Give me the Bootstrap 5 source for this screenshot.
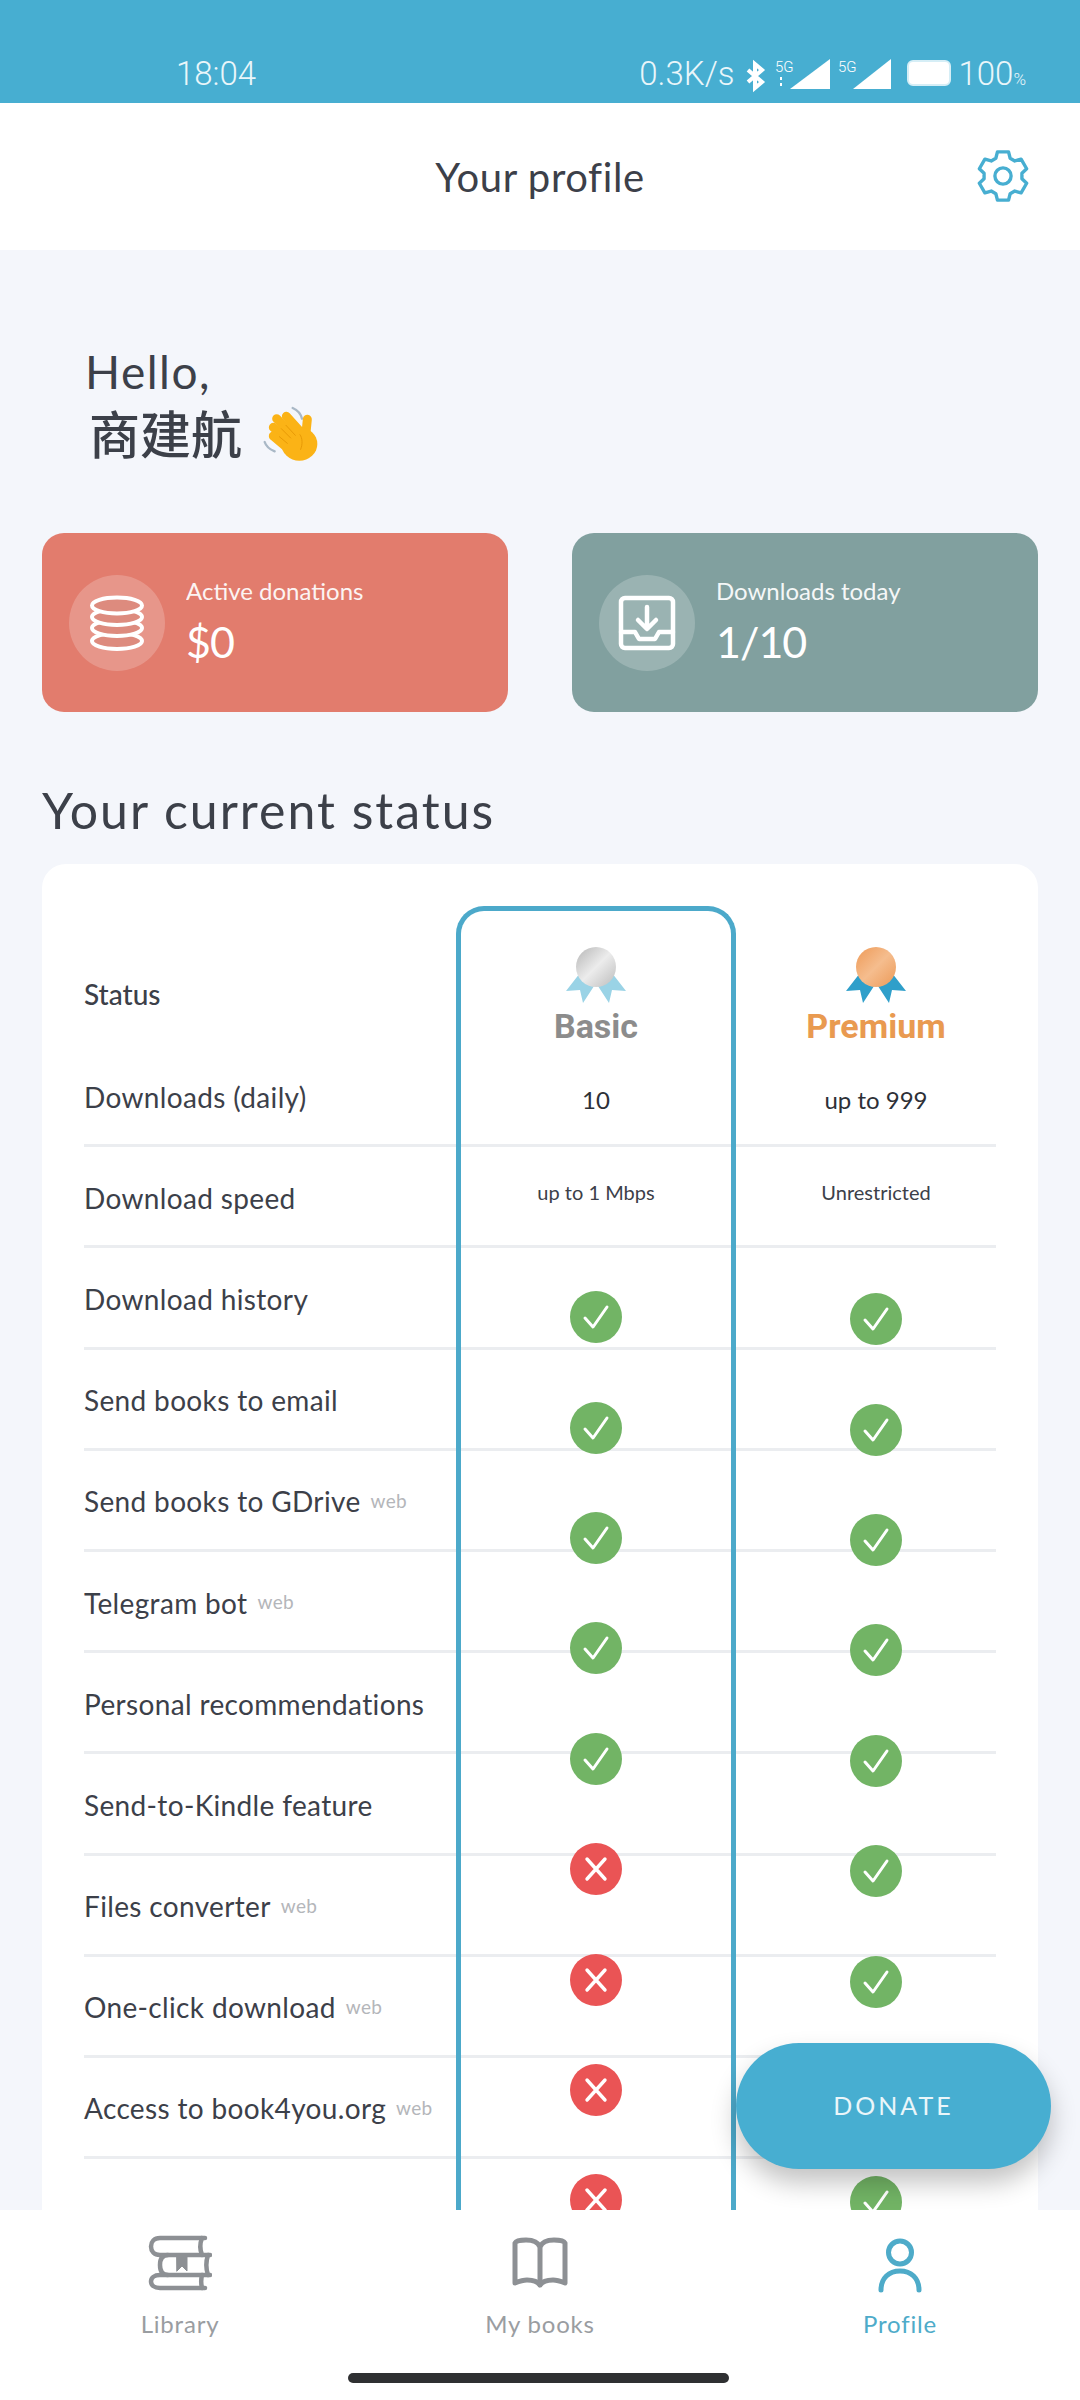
<!DOCTYPE html>
<html lang="en">
<head>
    <meta charset="UTF-8">
    <meta name="viewport" content="width=device-width, initial-scale=1.0">
    <title>Your profile</title>
    <link href="https://cdn.jsdelivr.net/npm/bootstrap@5.3.0/dist/css/bootstrap.min.css" rel="stylesheet">
    <style>
        body { height: 2400px; background: #f4f6fb; color: #3c4049; font-family: "Lato", "Noto Sans CJK SC", sans-serif; font-size: 28px; }
        .status-strip { height: 103px; background: #47aed1; color: #eaf6fa; font-family: "Roboto", sans-serif; font-weight: 300; font-size: 33px; padding: 0 54px 12px 176px; line-height: 34px; }
        .status-strip small { font-size: 17px; line-height: 1; }
        .sig-svg { margin-left: 8px; overflow: visible; }
        .batt-svg { margin: 0 0 5px 16px; }
        .title-strip { height: 147px; }
        .title-strip h1 { font-size: 40px; font-weight: 400; margin: 0; letter-spacing: .6px; }
        .gear-btn { right: 50px; top: 46px; }
        .greeting { padding: 91px 0 0 85px; height: 283px; }
        .hello-line { font-size: 46px; line-height: 62px; letter-spacing: 1.5px; }
        .name-line { font-size: 51px; line-height: 64px; font-weight: 500; padding-left: 4px; }
        .hand-svg { margin: -5px 0 -11px 20px; }
        .stat-row { padding: 0 42px; gap: 64px; }
        .stat-box { height: 179px; border-radius: 22px; padding-left: 27px; gap: 21px; color: #fff; }
        .stat-red { background: #e27c6d; }
        .stat-teal { background: #81a09f; }
        .stat-circle { width: 96px; height: 96px; background: rgba(255,255,255,.2); }
        .stat-label { font-size: 24px; line-height: 28px; margin: -3px 0 13px; opacity: .92; }
        .stat-value { font-size: 43px; line-height: 48px; letter-spacing: -1px; }
        .section-title { font-size: 50px; font-weight: 400; margin: 68px 0 0 42px; line-height: 60px; letter-spacing: 2px; }
        .table-box { margin: 24px 42px 0; background: #fff; border-radius: 24px; padding: 0 42px; height: 1400px; }
        .head-row { height: 182px; padding-top: 77px; font-weight: 500; }
        .feature-row { height: 101.2px; border-bottom: 3px solid #ebedf0; letter-spacing: .35px; padding-top: 3px; }
        .head-row, .feature-row { display: flex; align-items: center; }
        .web-tag { font-size: 19px; color: #b4b6ba; margin-left: 10px; }
        .plan-col { position: absolute; top: 42px; width: 280px; text-align: center; }
        .plan-basic { left: 414px; padding-top: 36px; border: 5px solid #4ca9ca; border-bottom: 0; border-radius: 28px 28px 0 0; height: 1400px; }
        .plan-premium { left: 694px; padding-top: 41px; }
        .medal-svg { display: block; margin: 0 auto; }
        .plan-name { font-family: "Roboto", sans-serif; font-weight: 700; font-size: 34px; height: 45px; line-height: 46px; }
        .name-basic { color: #8c8c8c; }
        .name-premium { color: #e99a50; }
        .plan-count { height: 103px; line-height: 104px; font-size: 24px; color: #2d3037; }
        .plan-speed { height: 82px; line-height: 82px; font-size: 20px; margin-bottom: 29px; color: #3c4049; }
        .plan-premium .plan-speed { margin-bottom: 31px; }
        .mark-slot { height: 110.4px; display: flex; align-items: center; justify-content: center; }
        .donate-btn { position: absolute; left: 736px; top: 2043px; width: 315px; height: 126px; border-radius: 63px; background: #47aed1; color: #eaf6fa; font-size: 25px; letter-spacing: 3px; box-shadow: 0 14px 26px rgba(0,0,0,.24); border: 0; z-index: 5; }
        .tab-strip { height: 190px; background: #fff; position: relative; z-index: 3; }
        .tab-item { height: 130px; padding-top: 25px; font-size: 24px; color: #9a9da1; letter-spacing: .8px; }
        .tab-icon { height: 60px; margin-bottom: 11px; }
        .tab-on { color: #4eabc9; }
        .home-bar { position: absolute; left: 348px; top: 163px; width: 381px; height: 10px; border-radius: 5px; background: #2f3032; }
    </style>
</head>
<body class="d-flex flex-column overflow-hidden position-relative m-0">
    <svg width="0" height="0" class="position-absolute">
        <symbol id="ok" viewBox="0 0 52 52"><circle cx="26" cy="26" r="26" fill="#72b465"/><path d="M15 27l8 9 14-20" fill="none" stroke="#fff" stroke-width="3" stroke-linecap="round" stroke-linejoin="round"/></symbol>
        <symbol id="no" viewBox="0 0 52 52"><circle cx="26" cy="26" r="26" fill="#ea5455"/><path d="M17 16l18 20M35 16L17 36" fill="none" stroke="#fff" stroke-width="3.4" stroke-linecap="round"/></symbol>
    </svg>

    <!-- Status bar -->
    <div class="status-strip d-flex align-items-end justify-content-between flex-shrink-0">
        <span>18:04</span>
        <div class="d-flex align-items-end">
            <span>0.3K/s</span>
            <svg class="sig-svg" width="24" height="30" viewBox="0 0 24 30"><path d="M5 9l14 12-7 6V3l7 6L5 21" fill="none" stroke="#fff" stroke-width="4"/></svg>
            <svg class="sig-svg" width="55" height="32" viewBox="0 0 55 32"><polygon points="55,0 55,30 15,30" fill="#fff"/><text x="0" y="13" font-size="15" fill="#fff">5G</text><path d="M6 18v3M6 24v3" stroke="#fff" stroke-width="2"/></svg>
            <svg class="sig-svg" width="53" height="32" viewBox="0 0 53 32"><polygon points="53,0 53,30 15,30" fill="#fff"/><text x="0" y="13" font-size="15" fill="#fff">5G</text></svg>
            <svg class="batt-svg" width="44" height="26" viewBox="0 0 44 26"><rect x="1" y="1" width="42" height="24" rx="5" fill="#fff" stroke="#d6eef6" stroke-width="2"/></svg>
            <span class="ms-2">100<small>%</small></span>
        </div>
    </div>

    <!-- Top bar -->
    <header class="title-strip bg-white d-flex align-items-center justify-content-center position-relative flex-shrink-0">
        <h1>Your profile</h1>
        <svg class="gear-btn position-absolute" width="54" height="54" viewBox="0 0 24 24" fill="none" stroke="#47aed1" stroke-width="1.5" stroke-linejoin="round">
            <path d="M8.82 4.12L9.53 1.28H14.47L15.18 4.12L17.23 5.31L20.05 4.5L22.52 8.78L20.41 10.81V13.19L22.52 15.22L20.05 19.5L17.23 18.69L15.18 19.88L14.47 22.72H9.53L8.82 19.88L6.77 18.69L3.95 19.5L1.48 15.22L3.59 13.19V10.81L1.48 8.78L3.95 4.5L6.77 5.31Z"/>
            <circle cx="12" cy="12" r="3.6"/>
        </svg>
    </header>

    <main class="flex-grow-1 overflow-hidden">
        <div class="greeting">
            <div class="hello-line">Hello,</div>
            <div class="name-line d-flex align-items-center">商建航
                <svg class="hand-svg" width="80" height="80" viewBox="0 0 240 240">
                    <path d="M92 30c14 6 24 16 28 32M8 132c4 12 14 22 30 28" stroke="#a9b8c6" stroke-width="7" fill="none" stroke-linecap="round"/>
                    <g stroke="#fbb316" stroke-width="27" stroke-linecap="round" fill="none">
                        <path d="M73 55l50 55"/>
                        <path d="M44 62l60 60"/>
                        <path d="M34 88l56 48"/>
                        <path d="M34 114l50 42"/>
                        <path d="M136 64l-6 60"/>
                    </g>
                    <ellipse cx="112" cy="138" rx="54" ry="50" fill="#fbb316"/>
                    <path d="M72 82l28 30M58 92l28 28M52 116l24 20M114 110c8 10 8 30 2 44" stroke="#e89a06" stroke-width="3" fill="none" stroke-linecap="round"/>
                </svg>
            </div>
        </div>

        <div class="stat-row d-flex">
            <div class="stat-box stat-red flex-fill w-50 d-flex align-items-center">
                <div class="stat-circle rounded-circle d-flex align-items-center justify-content-center flex-shrink-0">
                    <svg width="58" height="56" viewBox="0 0 58 56" fill="#dd8b7e" stroke="#fff" stroke-width="4">
                        <ellipse cx="29" cy="46" rx="25" ry="8"/><ellipse cx="29" cy="33" rx="25" ry="8"/><ellipse cx="29" cy="22" rx="25" ry="8"/><ellipse cx="29" cy="10.5" rx="25" ry="8"/>
                    </svg>
                </div>
                <div>
                    <div class="stat-label">Active donations</div>
                    <div class="stat-value">$0</div>
                </div>
            </div>
            <div class="stat-box stat-teal flex-fill w-50 d-flex align-items-center">
                <div class="stat-circle rounded-circle d-flex align-items-center justify-content-center flex-shrink-0">
                    <svg width="58" height="56" viewBox="0 0 58 56" fill="none" stroke="#fff" stroke-width="4.5" stroke-linejoin="round" stroke-linecap="round">
                        <rect x="3" y="3" width="52" height="50" rx="4"/>
                        <path d="M3 37h14l4 7h16l4-7h14"/>
                        <path d="M29 12v21M20 25l9 9 9-9"/>
                    </svg>
                </div>
                <div>
                    <div class="stat-label">Downloads today</div>
                    <div class="stat-value">1/10</div>
                </div>
            </div>
        </div>

        <h2 class="section-title">Your current status</h2>

        <div class="table-box position-relative">
            <div class="head-row">Status</div>
            <div class="feature-row">Downloads (daily)</div>
            <div class="feature-row">Download speed</div>
            <div class="feature-row">Download history</div>
            <div class="feature-row">Send books to email</div>
            <div class="feature-row">Send books to GDrive<span class="web-tag">web</span></div>
            <div class="feature-row">Telegram bot<span class="web-tag">web</span></div>
            <div class="feature-row">Personal recommendations</div>
            <div class="feature-row">Send-to-Kindle feature</div>
            <div class="feature-row">Files converter<span class="web-tag">web</span></div>
            <div class="feature-row">One-click download<span class="web-tag">web</span></div>
            <div class="feature-row">Access to book4you.org<span class="web-tag">web</span></div>

            <div class="plan-col plan-basic">
                <svg class="medal-svg" width="60" height="56" viewBox="0 0 60 56">
                    <defs><linearGradient id="silver" x1="0" y1="0" x2="1" y2="1"><stop offset="0" stop-color="#b5b5b5"/><stop offset=".5" stop-color="#ececec"/><stop offset="1" stop-color="#bcbcbc"/></linearGradient></defs>
                    <polygon points="14,26 0,44 14,43 17,56 30,36" fill="#9ad3e6"/>
                    <polygon points="46,26 60,44 46,43 43,56 30,36" fill="#9ad3e6"/>
                    <circle cx="30" cy="20" r="20" fill="url(#silver)"/>
                </svg>
                <div class="plan-name name-basic">Basic</div>
                <div class="plan-count">10</div>
                <div class="plan-speed">up to 1 Mbps</div>
                <div class="mark-slot"><svg width="52" height="52"><use href="#ok"/></svg></div>
                <div class="mark-slot"><svg width="52" height="52"><use href="#ok"/></svg></div>
                <div class="mark-slot"><svg width="52" height="52"><use href="#ok"/></svg></div>
                <div class="mark-slot"><svg width="52" height="52"><use href="#ok"/></svg></div>
                <div class="mark-slot"><svg width="52" height="52"><use href="#ok"/></svg></div>
                <div class="mark-slot"><svg width="52" height="52"><use href="#no"/></svg></div>
                <div class="mark-slot"><svg width="52" height="52"><use href="#no"/></svg></div>
                <div class="mark-slot"><svg width="52" height="52"><use href="#no"/></svg></div>
                <div class="mark-slot"><svg width="52" height="52"><use href="#no"/></svg></div>
            </div>

            <div class="plan-col plan-premium">
                <svg class="medal-svg" width="60" height="56" viewBox="0 0 60 56">
                    <defs><linearGradient id="bronze" x1="0" y1="0" x2="1" y2="1"><stop offset="0" stop-color="#ee9a57"/><stop offset=".5" stop-color="#f5bd8e"/><stop offset="1" stop-color="#ec9a58"/></linearGradient></defs>
                    <polygon points="14,26 0,44 14,43 17,56 30,36" fill="#2f9fca"/>
                    <polygon points="46,26 60,44 46,43 43,56 30,36" fill="#2f9fca"/>
                    <circle cx="30" cy="20" r="20" fill="url(#bronze)"/>
                </svg>
                <div class="plan-name name-premium">Premium</div>
                <div class="plan-count">up to 999</div>
                <div class="plan-speed">Unrestricted</div>
                <div class="mark-slot"><svg width="52" height="52"><use href="#ok"/></svg></div>
                <div class="mark-slot"><svg width="52" height="52"><use href="#ok"/></svg></div>
                <div class="mark-slot"><svg width="52" height="52"><use href="#ok"/></svg></div>
                <div class="mark-slot"><svg width="52" height="52"><use href="#ok"/></svg></div>
                <div class="mark-slot"><svg width="52" height="52"><use href="#ok"/></svg></div>
                <div class="mark-slot"><svg width="52" height="52"><use href="#ok"/></svg></div>
                <div class="mark-slot"><svg width="52" height="52"><use href="#ok"/></svg></div>
                <div class="mark-slot"><svg width="52" height="52"><use href="#ok"/></svg></div>
                <div class="mark-slot"><svg width="52" height="52"><use href="#ok"/></svg></div>
            </div>
        </div>
    </main>

    <button class="donate-btn">DONATE</button>

    <!-- Bottom tabs -->
    <nav class="tab-strip row g-0 flex-shrink-0">
        <div class="col-4 tab-item text-center">
            <svg class="tab-icon d-block mx-auto" width="64" height="60" viewBox="0 0 64 60" fill="none" stroke="#8d9094" stroke-width="4.5" stroke-linejoin="round" stroke-linecap="round">
                <path d="M57 3H12C6 3 3 7 3 11.5S6 20 12 20H62"/>
                <path d="M54 3c-2 5-2 12 0 17"/>
                <path d="M20 20c-6 0-8 4-8 10s2 10 8 10"/>
                <path d="M60 20c-2 6-2 14 0 20"/>
                <path d="M62 40H12c-6 0-9 3-9 6.5s3 6.5 9 6.5H57"/>
                <path d="M54 40c-1 4-1 9 0 13"/>
                <path d="M29 20h10v16l-5-5-5 5z" fill="#8d9094" stroke-width="1"/>
            </svg>
            Library
        </div>
        <div class="col-4 tab-item text-center">
            <svg class="tab-icon d-block mx-auto" width="56" height="60" viewBox="0 0 56 60" fill="none" stroke="#8d9094" stroke-width="5" stroke-linejoin="round" stroke-linecap="round">
                <path d="M28 12c-2-5-7-7-14-7-5 0-10 1-11 3v40c5-2 8-3 12-3 6 0 11 2 13 5 2-3 7-5 13-5 4 0 7 1 12 3V8c-1-2-6-3-11-3-7 0-12 2-14 7v38"/>
            </svg>
            My books
        </div>
        <div class="col-4 tab-item text-center tab-on">
            <svg class="tab-icon d-block mx-auto" width="46" height="60" viewBox="0 0 46 60" fill="none" stroke="#4eabc9" stroke-width="5" stroke-linecap="round">
                <circle cx="23" cy="17.5" r="11.5"/>
                <path d="M4 55c0-12 8-19 19-19s19 7 19 19"/>
            </svg>
            Profile
        </div>
        <div class="home-bar"></div>
    </nav>

    <script src="https://cdn.jsdelivr.net/npm/bootstrap@5.3.0/dist/js/bootstrap.bundle.min.js"></script>
</body>
</html>
